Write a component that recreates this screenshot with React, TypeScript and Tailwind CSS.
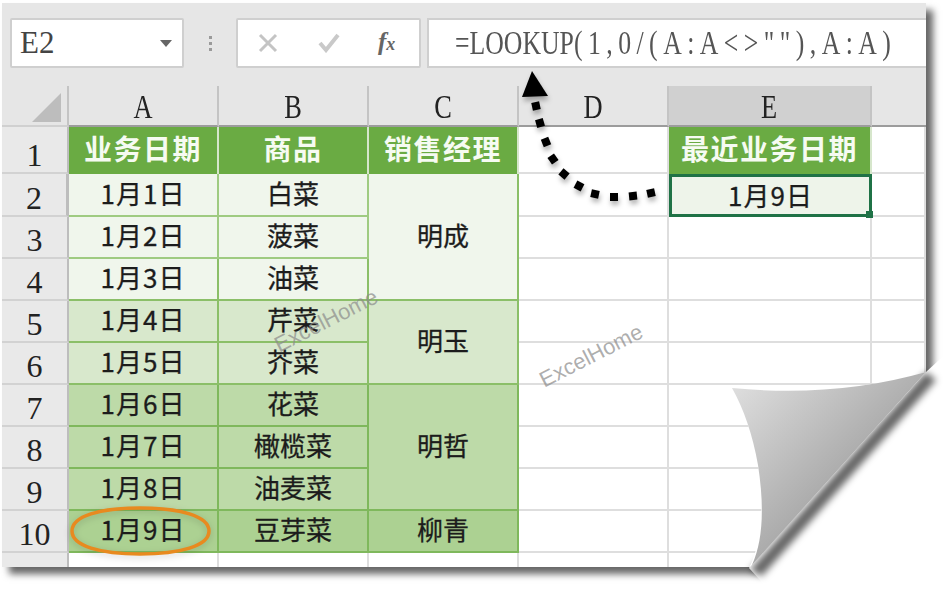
import React from "react";

const ROWS: { n: number; date: string; item: string; tone: string; line: string }[] = [
  { n: 2, date: "1月1日", item: "白菜", tone: "bg-[#f0f6ec]", line: "border-[#9fcb81]" },
  { n: 3, date: "1月2日", item: "菠菜", tone: "bg-[#f0f6ec]", line: "border-[#9fcb81]" },
  { n: 4, date: "1月3日", item: "油菜", tone: "bg-[#f0f6ec]", line: "border-[#8bbf68]" },
  { n: 5, date: "1月4日", item: "芹菜", tone: "bg-[#d8e8cc]", line: "border-[#8bbf68]" },
  { n: 6, date: "1月5日", item: "芥菜", tone: "bg-[#d8e8cc]", line: "border-[#8bbf68]" },
  { n: 7, date: "1月6日", item: "花菜", tone: "bg-[#bddaa8]", line: "border-[#7fb85c]" },
  { n: 8, date: "1月7日", item: "橄榄菜", tone: "bg-[#bddaa8]", line: "border-[#7fb85c]" },
  { n: 9, date: "1月8日", item: "油麦菜", tone: "bg-[#bddaa8]", line: "border-[#7fb85c]" },
  { n: 10, date: "1月9日", item: "豆芽菜", tone: "bg-[#acd192]", line: "border-[#7fb85c]" },
];

const MANAGERS: Record<number, { name: string; span: string; tone: string; line: string }> = {
  2: { name: "明成", span: "row-span-3", tone: "bg-[#f0f6ec]", line: "border-[#8bbf68]" },
  5: { name: "明玉", span: "row-span-2", tone: "bg-[#d8e8cc]", line: "border-[#8bbf68]" },
  7: { name: "明哲", span: "row-span-3", tone: "bg-[#bddaa8]", line: "border-[#7fb85c]" },
  10: { name: "柳青", span: "row-span-1", tone: "bg-[#acd192]", line: "border-[#7fb85c]" },
};

const DOTS: [number, number, number][] = [
  [651, 193, -12],
  [633, 196, -6],
  [614, 197, 0],
  [595, 194, 12],
  [579, 186, 28],
  [564, 174, 40],
  [553, 159, 55],
  [546, 142, 68],
  [540, 123, 74],
  [536, 106, 78],
];

const cjk = "font-['Noto_Sans_CJK_SC',sans-serif]";
const serif = "font-['Liberation_Serif',serif]";
const head = `flex items-center justify-center border-r-2 border-[#c4c4c4] border-b-2 border-b-[#9c9c9c] pt-1 text-[#222] ${serif}`;
const rowHead = `flex items-end justify-center border-r-2 border-r-[#bdbdbd] border-b-2 border-[#d2d2d2] bg-[#e9e9e9] text-[32px] leading-[34px] text-[#222] ${serif}`;
const blank = "border-r-2 border-b-2 border-[#dedede] bg-white";
const cellText = `text-[26px] font-normal text-[#1c1c1c] [-webkit-text-stroke:0.3px_#1c1c1c] ${cjk}`;
const cell = `flex items-center justify-center border-r-2 border-b-2 pb-[5px] ${cellText}`;

function ColumnLetter({ children }: { children: React.ReactNode }) {
  return <span className="inline-block scale-x-[0.8] text-[33px] leading-none">{children}</span>;
}

function HeaderCell({ children }: { children: React.ReactNode }) {
  return (
    <div
      className={`flex items-center justify-center bg-[#6aab43] border-r-2 border-[#d6e6cb] pb-[5px] text-[28px] font-bold tracking-[1.5px] text-[#f6fbf2] ${cjk}`}
    >
      {children}
    </div>
  );
}

export default function App() {
  return (
    <div className="relative w-[950px] h-[591px] overflow-hidden bg-white pl-[2px] pt-[3px]">
      <div className="w-[924px] h-[564px] flex flex-col bg-[#e6e6e6] shadow-[7px_7px_7px_rgba(0,0,0,0.6)]">
        {/* formula bar */}
        <div className="h-[83px] flex pt-[15px] pl-2 shrink-0">
          <div className="w-[174px] shrink-0 h-[50px] flex items-center justify-between bg-white border-2 border-[#cfcfcf] rounded-[2px] pl-2 pr-2.5">
            <span className={`text-[31px] text-[#444] ${serif}`}>E2</span>
            <span className="w-0 h-0 border-x-[6px] border-x-transparent border-t-[7px] border-t-[#666]" />
          </div>
          <div className="w-[52px] shrink-0 h-[50px] flex flex-col items-center justify-center gap-[3px]">
            <span className="w-[3px] h-[3px] bg-[#9a9a9a]" />
            <span className="w-[3px] h-[3px] bg-[#9a9a9a]" />
            <span className="w-[3px] h-[3px] bg-[#9a9a9a]" />
          </div>
          <div className="w-[185px] shrink-0 h-[50px] flex items-center bg-white border-2 border-[#cfcfcf] rounded-[2px] pl-[20px]">
            <svg width="20" height="20" viewBox="0 0 20 20" fill="none" stroke="#c4c4c4" strokeWidth="3">
              <path d="M2 2 L18 18 M18 2 L2 18" />
            </svg>
            <svg className="ml-[40px]" width="22" height="20" viewBox="0 0 22 20" fill="none" stroke="#c9c9c9" strokeWidth="4">
              <path d="M2 10 L8 17 L20 2" />
            </svg>
            <span className={`ml-[38px] -mt-[4px] text-[25px] font-bold italic leading-none text-[#666] ${serif}`}>
              f<span className="text-[18px]">x</span>
            </span>
          </div>
          <div className="ml-1.5 flex-1 min-w-0 h-[50px] flex items-center bg-white border-y-2 border-l-2 border-[#cfcfcf] pl-[26px]">
            <span className={`inline-block origin-left scale-x-[0.78] text-[33px] leading-none text-[#555] whitespace-pre ${serif}`}>
              =LOOKUP<span className="tracking-[7px]">(1,0/(A:A&lt;&gt;""),A:A)</span>
            </span>
          </div>
        </div>

        {/* sheet */}
        <div className="flex-1 grid grid-cols-[67px_150px_150px_150px_150px_203px_1fr] grid-rows-[41px_47px_43px_42px_42px_42px_42px_42px_42px_42px_42px_14px]">
          <div className="flex items-start justify-end pt-[7px] pr-[6px] border-r-2 border-[#c4c4c4] border-b-2 border-b-[#d0d0d0]">
            <span className="w-0 h-0 border-l-[29px] border-l-transparent border-b-[29px] border-b-[#bdbdbd]" />
          </div>
          <div className={head}><ColumnLetter>A</ColumnLetter></div>
          <div className={head}><ColumnLetter>B</ColumnLetter></div>
          <div className={head}><ColumnLetter>C</ColumnLetter></div>
          <div className={head}><ColumnLetter>D</ColumnLetter></div>
          <div className={`${head} bg-[#d0d0d0] text-[#2c6e4d] border-b-[#1f7246]`}><ColumnLetter>E</ColumnLetter></div>
          <div className="border-b-2 border-b-[#9c9c9c]" />

          <div className={rowHead}>1</div>
          <HeaderCell>业务日期</HeaderCell>
          <HeaderCell>商品</HeaderCell>
          <HeaderCell>销售经理</HeaderCell>
          <div className={blank} />
          <HeaderCell>最近业务日期</HeaderCell>
          <div className={blank} />

          {ROWS.map((row) => {
            const manager = MANAGERS[row.n];
            const selected = row.n === 2;
            return (
              <React.Fragment key={row.n}>
                <div
                  className={`${rowHead} ${selected ? "bg-[#d0d0d0] text-[#2c6e4d] border-r-[3px] border-r-[#1f7246]" : ""}`}
                >
                  {row.n}
                </div>
                <div className={`${cell} ${row.tone} ${row.line} tracking-[1px]`}>{row.date}</div>
                <div className={`${cell} ${row.tone} ${row.line}`}>{row.item}</div>
                {manager && (
                  <div className={`${cell} ${manager.span} ${manager.tone} ${manager.line}`}>{manager.name}</div>
                )}
                <div className={blank} />
                {selected ? (
                  <div
                    className={`relative flex items-center justify-center border-[3px] border-[#1f7246] bg-[#eef4ea] pb-[3px] tracking-[1px] ${cellText}`}
                  >
                    1月9日
                    <span className="absolute -right-[4px] -bottom-[4px] w-[7px] h-[7px] bg-[#1f7246]" />
                  </div>
                ) : (
                  <div className={blank} />
                )}
                <div className={blank} />
              </React.Fragment>
            );
          })}

          <div className="bg-[#e9e9e9] border-r-2 border-[#bdbdbd]" />
          <div className="border-r-2 border-[#dedede] bg-white" />
          <div className="border-r-2 border-[#dedede] bg-white" />
          <div className="border-r-2 border-[#dedede] bg-white" />
          <div className="border-r-2 border-[#dedede] bg-white" />
          <div className="border-r-2 border-[#dedede] bg-white" />
          <div className="bg-white" />
        </div>
      </div>

      {/* watermarks */}
      <span className="absolute left-[270px] top-[310px] -rotate-[27deg] font-['Liberation_Sans',sans-serif] text-[22px] leading-none text-[#8a8a8a]/70">
        ExcelHome
      </span>
      <span className="absolute left-[535px] top-[345px] -rotate-[27deg] font-['Liberation_Sans',sans-serif] text-[22px] leading-none text-[#8a8a8a]/70">
        ExcelHome
      </span>

      {/* arrow, ring and page curl lie over the sheet */}
      <svg className="absolute inset-0" width="950" height="591" viewBox="0 0 950 591">
        <defs>
          <filter id="soft" x="-20%" y="-20%" width="140%" height="140%">
            <feDropShadow dx="1" dy="4" stdDeviation="2.5" floodColor="#000" floodOpacity="0.3" />
          </filter>
          <filter id="blur" x="-20%" y="-20%" width="140%" height="140%">
            <feGaussianBlur stdDeviation="3.5" />
          </filter>
          <linearGradient id="flap" x1="0" y1="0" x2="1" y2="1">
            <stop offset="0" stopColor="#e2e2e2" />
            <stop offset="0.6" stopColor="#a6a6a6" />
            <stop offset="1" stopColor="#808080" />
          </linearGradient>
        </defs>

        <g filter="url(#soft)">
          {DOTS.map(([x, y, r]) => (
            <rect key={x} x={x - 4} y={y - 4} width="8" height="8" fill="#000" transform={`rotate(${r} ${x} ${y})`} />
          ))}
          <path d="M532 71 L522 97 L548 96 Z" fill="#000" />
        </g>

        <path
          d="M72 533 C72 518 100 510 140 510 C180 510 209 518 209 533 C209 548 180 556 140 556 C100 556 72 548 72 533 Z"
          fill="none"
          stroke="#000"
          strokeOpacity="0.22"
          strokeWidth="3"
          filter="url(#blur)"
        />
        <path
          d="M72 531 C72 516 100 508 140 508 C180 508 209 516 209 531 C209 546 180 554 140 554 C100 554 72 546 72 531 Z"
          fill="none"
          stroke="#e88a1f"
          strokeWidth="3.5"
        />

        {/* page curl */}
        <path d="M926 372 L950 350 L950 591 L770 591 L749 568 Z" fill="#fff" />
        <path d="M926 372 L936 380 L762 576 L750 570 Z" fill="#000" fillOpacity="0.6" filter="url(#blur)" />
        <path d="M732 388 Q835 398 926 372 L749 568 Q768 530 758 465 Q750 420 732 388 Z" fill="#fff" />
        <path d="M732 388 Q835 398 926 372 L752 565 Q768 530 758 465 Q750 420 732 388 Z" fill="url(#flap)" />
      </svg>
    </div>
  );
}
